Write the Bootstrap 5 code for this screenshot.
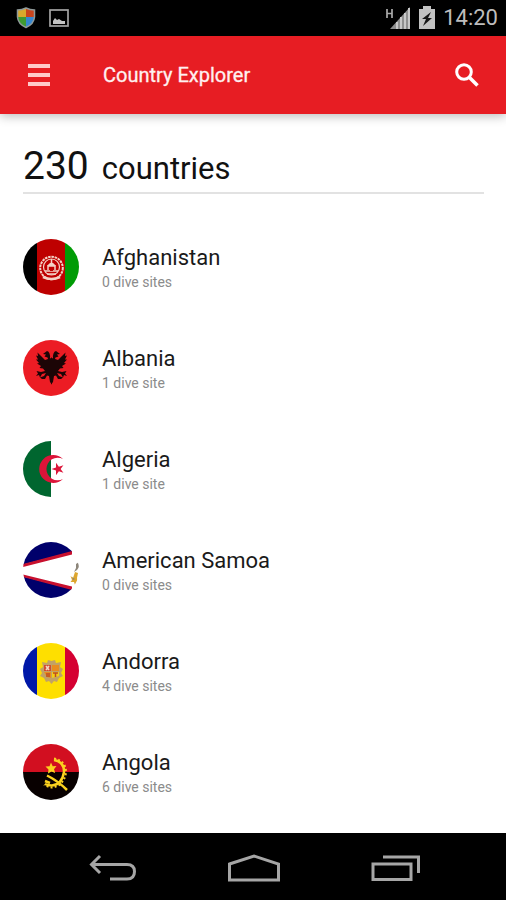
<!DOCTYPE html>
<html lang="en">
<head>
<meta charset="utf-8">
<meta name="viewport" content="width=device-width, initial-scale=1">
<title>Country Explorer</title>
<link rel="stylesheet" href="https://cdn.jsdelivr.net/npm/bootstrap@5.3.0/dist/css/bootstrap.min.css">
<style>
  body { font-family: Roboto, "Liberation Sans", sans-serif; color: #111; }
  .status-bar { height: 36px; padding: 0 8px 0 16px; background: #000; color: #bdbdbd; }
  .status-icons { gap: 13px; }
  .status-clock { font-size: 22px; line-height: 36px; }
  .app-bar { height: 78px; padding: 0 23px; background: #e71d23; box-shadow: 0 2px 10px rgba(0,0,0,.28); z-index: 1; }
  .icon-btn { width: 32px; height: 40px; }
  .app-title { font-size: 20px; line-height: 28px; margin-left: 48px; font-weight: 400; color: #fff0f0; -webkit-text-stroke: .3px #fff0f0; }
  .page-main { padding: 0 22px 0 23px; }
  .count-head { height: 80px; padding-top: 28px; border-bottom: 2px solid #e2e2e2; margin-bottom: 22px; line-height: 48px; }
  .count-num { font-size: 39px; margin-right: 13px; }
  .count-word { font-size: 31px; }
  .country-row { height: 101px; gap: 23px; color: #1a1a1a; }
  .country-text { padding-top: 3px; }
  .flag { width: 56px; height: 56px; }
  .country-name { font-size: 22px; line-height: 28px; }
  .country-sites { font-size: 14px; line-height: 21px; color: #8b8b8b; }
  .nav-keys { height: 67px; background: #000; padding: 2px 40px 0 44px; }
  .nav-keys svg { display: block; margin: auto; }
</style>
<script defer src="https://cdn.jsdelivr.net/npm/bootstrap@5.3.0/dist/js/bootstrap.bundle.min.js"></script>
</head>
<body class="d-flex flex-column min-vh-100 bg-white">

<svg width="0" height="0" class="position-absolute" aria-hidden="true">
  <clipPath id="round"><circle cx="28" cy="28" r="28"/></clipPath>
</svg>

<div class="status-bar d-flex align-items-center">
  <div class="status-icons d-flex align-items-center me-auto">
    <svg width="20" height="22" viewBox="0 0 20 22" aria-hidden="true">
      <clipPath id="shield"><path d="M10 1Q14 3 18.500 3V10Q18 17 10 20.500Q2 17 1.500 10V3Q6 3 10 1Z"/></clipPath>
      <g clip-path="url(#shield)">
        <path fill="#d9a92c" d="M0 0H10V10H0Z"/><path fill="#c8441d" d="M10 0H20V10H10Z"/>
        <path fill="#3f9b32" d="M0 10H10V22H0Z"/><path fill="#3587d0" d="M10 10H20V22H10Z"/>
      </g>
      <path d="M10 1Q14 3 18.500 3V10Q18 17 10 20.500Q2 17 1.500 10V3Q6 3 10 1Z" fill="none" stroke="#8f9a9a" stroke-width="1.500"/>
    </svg>
    <svg width="20" height="20" viewBox="0 0 20 20" aria-hidden="true">
      <rect x="1" y="2" width="18" height="16" fill="none" stroke="#a4a4a4" stroke-width="1.700"/>
      <path fill="#c4c4c4" d="M4 16V13L6 10L8 12L10 11L13 13H16V16Z"/>
    </svg>
  </div>
  <svg width="26" height="24" viewBox="0 0 26 24" aria-label="Mobile signal" role="img">
    <path d="M2 3V12M7 3V12M2 7.500H7" stroke="#aaa" stroke-width="1.700" fill="none"/>
    <path fill="#8f8f8f" d="M5 23L25 1V23Z"/>
    <path stroke="#c8c8c8" stroke-width="2" d="M12 23V16M16 23V11M20 23V7M24 23V2"/>
  </svg>
  <svg class="ms-2" width="16" height="24" viewBox="0 0 16 24" aria-label="Battery charging" role="img">
    <path fill="#c2c2c2" d="M4 0H12V3H16V23H0V3H4Z"/>
    <path fill="#161616" d="M12 6L3 13H7L4 20L13 12H9Z"/>
  </svg>
  <span class="status-clock ms-2">14:20</span>
</div>

<header class="app-bar d-flex align-items-center position-relative">
  <button type="button" class="icon-btn btn p-0 border-0 d-flex align-items-center justify-content-center" aria-label="Menu">
    <svg width="22" height="24" viewBox="0 0 22 24"><path fill="#ffc9c9" d="M0 1H22V5H0ZM0 10H22V14H0ZM0 19H22V23H0Z"/></svg>
  </button>
  <h1 class="app-title mb-0 me-auto">Country Explorer</h1>
  <button type="button" class="icon-btn btn p-0 border-0 d-flex align-items-center justify-content-center" aria-label="Search">
    <svg width="24" height="24" viewBox="0 0 24 24" fill="none" stroke="#fff"><circle cx="9" cy="9" r="7.300" stroke-width="3"/><path stroke-width="3.600" d="M14 14L22.500 22.500"/></svg>
  </button>
</header>

<main class="page-main flex-grow-1">
  <h2 class="count-head d-flex align-items-baseline fw-normal"><span class="count-num">230</span><span class="count-word">countries</span></h2>

  <a href="#afghanistan" class="country-row d-flex align-items-center text-decoration-none">
    <svg class="flag flex-shrink-0" viewBox="0 0 56 56" aria-hidden="true"><g clip-path="url(#round)">
      <path fill="#000" d="M0 0H14V56H0Z"/><path fill="#be0000" d="M14 0H42V56H14Z"/><path fill="#009b05" d="M42 0H56V56H42Z"/>
      <g fill="none" stroke="#f4d2c6">
        <circle cx="28.500" cy="29" r="11.300" stroke-width="2" stroke-dasharray="2.500 .8"/>
        <circle cx="28.500" cy="28" r="8" stroke-width="1.200"/>
        <path stroke-width="2.500" d="M20 38Q28.500 42 37 38"/>
        <path stroke-width="1.500" d="M22 32H35M24 35H33M25 31V27H32V31M28.500 20V24"/>
      </g>
      <path fill="#f4d2c6" d="M24 27Q28.500 20 33 27Z"/>
      <path fill="#be0000" d="M27 32V29Q28.500 27 30 29V32Z"/>
    </g></svg>
    <span class="country-text d-flex flex-column"><span class="country-name">Afghanistan</span><span class="country-sites">0 dive sites</span></span>
  </a>

  <a href="#albania" class="country-row d-flex align-items-center text-decoration-none">
    <svg class="flag flex-shrink-0" viewBox="0 0 56 56" aria-hidden="true">
      <circle cx="28" cy="28" r="28" fill="#ec1c24"/>
      <g id="half-eagle">
        <path fill="#1c0506" d="M29 17.500L27 18.500Q27.500 12 24 11L20 14L23 14.500L21.500 16.500L24.500 17.500L25 19L22 20L18 16L14.500 12.500L15 16L13 15.500L15 19.500L13 19.500L16 23L14 23.500L18 26L16.500 28L20 28.500L22 31L18 32L13.500 31L15 33.500L13 36L16 35L17 37.500L19 34L23 33L21 36L17 37.500L19 39L22 39L24 35.500L26 36L27 42L29 44.500Z"/>
      </g>
      <use href="#half-eagle" transform="translate(57 0) scale(-1 1)"/>
    </svg>
    <span class="country-text d-flex flex-column"><span class="country-name">Albania</span><span class="country-sites">1 dive site</span></span>
  </a>

  <a href="#algeria" class="country-row d-flex align-items-center text-decoration-none">
    <svg class="flag flex-shrink-0" viewBox="0 0 56 56" aria-hidden="true"><g clip-path="url(#round)">
      <path fill="#fff" d="M0 0H56V56H0Z"/><path fill="#00662f" d="M0 0H28V56H0Z"/>
      <path fill="#dc1539" d="M40 18A14 14 0 1 0 40 38A11.300 11.300 0 1 1 40 18Z"/>
      <path fill="#dc1539" d="M28.500 28L33 26.600V21.800L35.900 25.700L40.400 24.200L37.600 28L40.400 31.800L35.900 30.300L33 34.200V29.400Z"/>
    </g></svg>
    <span class="country-text d-flex flex-column"><span class="country-name">Algeria</span><span class="country-sites">1 dive site</span></span>
  </a>

  <a href="#american-samoa" class="country-row d-flex align-items-center text-decoration-none">
    <svg class="flag flex-shrink-0" viewBox="0 0 56 56" aria-hidden="true"><g clip-path="url(#round)">
      <path fill="#fff" d="M0 0H56V56H0Z"/>
      <path fill="#00006b" d="M0 0H49V10L0 22.500ZM0 34.500L49 47V56H0Z"/>
      <path fill="#c8102e" d="M0 22L49 9V12.500L0 25ZM0 32.500L49 44.500V48L0 35Z"/>
      <path fill="#dda62e" d="M52 30L50 36L47.500 34L49 38L47.500 40L51 40L52 43L55 45V40L54 36L55 31Z"/>
      <path fill="#8d867b" d="M53 22L56 20V25L54 28L51 30L53 26ZM49 35L52 37L50 38Z"/>
    </g></svg>
    <span class="country-text d-flex flex-column"><span class="country-name">American Samoa</span><span class="country-sites">0 dive sites</span></span>
  </a>

  <a href="#andorra" class="country-row d-flex align-items-center text-decoration-none">
    <svg class="flag flex-shrink-0" viewBox="0 0 56 56" aria-hidden="true"><g clip-path="url(#round)">
      <path fill="#0018a8" d="M0 0H14V56H0Z"/><path fill="#fedf00" d="M14 0H42V56H14Z"/><path fill="#d50032" d="M42 0H56V56H42Z"/>
      <path fill="#c1a265" d="M25 17L28.500 18L32 17L33 20L38 19L37 24L40 26L38 30L40 33L36 35L34 39L31 38L28.500 41L26 38L23 39L21 35L17 33L19 30L17 26L20 24L19 19L24 20Z"/>
      <path fill="#d34a31" d="M21 22H28V28H21Z"/><path fill="#e88d1e" d="M29 22H36V28H29ZM21 29H28V35L24 34Z"/><path fill="#f2cf16" d="M29 29H36V33L29 35Z"/>
      <path stroke="#f3d7c2" stroke-width="1.500" fill="none" d="M23 23L26 27M26 23L23 27"/>
      <path stroke="#bf4c22" stroke-width="1.500" d="M30 30H35M32.500 30V34M24 30V34M26 30V34"/>
    </g></svg>
    <span class="country-text d-flex flex-column"><span class="country-name">Andorra</span><span class="country-sites">4 dive sites</span></span>
  </a>

  <a href="#angola" class="country-row d-flex align-items-center text-decoration-none">
    <svg class="flag flex-shrink-0" viewBox="0 0 56 56" aria-hidden="true"><g clip-path="url(#round)">
      <path fill="#d20f20" d="M0 0H56V28H0Z"/><path fill="#080000" d="M0 28H56V56H0Z"/>
      <g fill="none" stroke="#fbd11f">
        <path stroke-width="2.500" d="M31 16Q41.500 18 41 28Q39 40.500 29 41.500Q25 41.500 22 40"/>
        <path stroke-width="2" stroke-dasharray="2 2.200" d="M31 14.500Q43.500 17 43 29Q40.500 42 29 43.500Q25 43 21 41"/>
        <path stroke-width="2.500" d="M22 37L27 39"/>
        <path stroke-width="2.500" d="M24 31.500Q35 37 44 46"/>
      </g>
      <path fill="#fbd11f" d="M28 18.500L29.700 22.200L33.500 22L31 25.300L32.200 29L28.500 27.500L25 29.500L25.500 25.500L22.500 22.500L26.500 22.200Z"/>
    </g></svg>
    <span class="country-text d-flex flex-column"><span class="country-name">Angola</span><span class="country-sites">6 dive sites</span></span>
  </a>
</main>

<nav class="nav-keys d-flex align-items-center" aria-label="System">
  <button type="button" class="btn p-0 border-0 flex-fill" aria-label="Back">
    <svg width="48" height="28" viewBox="0 0 48 28" fill="none" stroke="#a6a6a6" stroke-width="3"><path d="M2 10.500H38Q45.500 10.500 45.500 17.500Q45.500 25 38 25H21"/><path d="M11 2L2.500 10.500L11 19"/></svg>
  </button>
  <button type="button" class="btn p-0 border-0 flex-fill" aria-label="Home">
    <svg width="54" height="30" viewBox="0 0 54 30" fill="none" stroke="#a6a6a6" stroke-width="3"><path d="M2.500 11L27 3L51.500 11V27H2.500Z"/></svg>
  </button>
  <button type="button" class="btn p-0 border-0 flex-fill" aria-label="Recent apps">
    <svg width="50" height="28" viewBox="0 0 50 28" fill="none" stroke="#a6a6a6" stroke-width="3"><path d="M2 10H40V25.500H2Z"/><path d="M12 3H47.500V19"/></svg>
  </button>
</nav>
</body>
</html>
